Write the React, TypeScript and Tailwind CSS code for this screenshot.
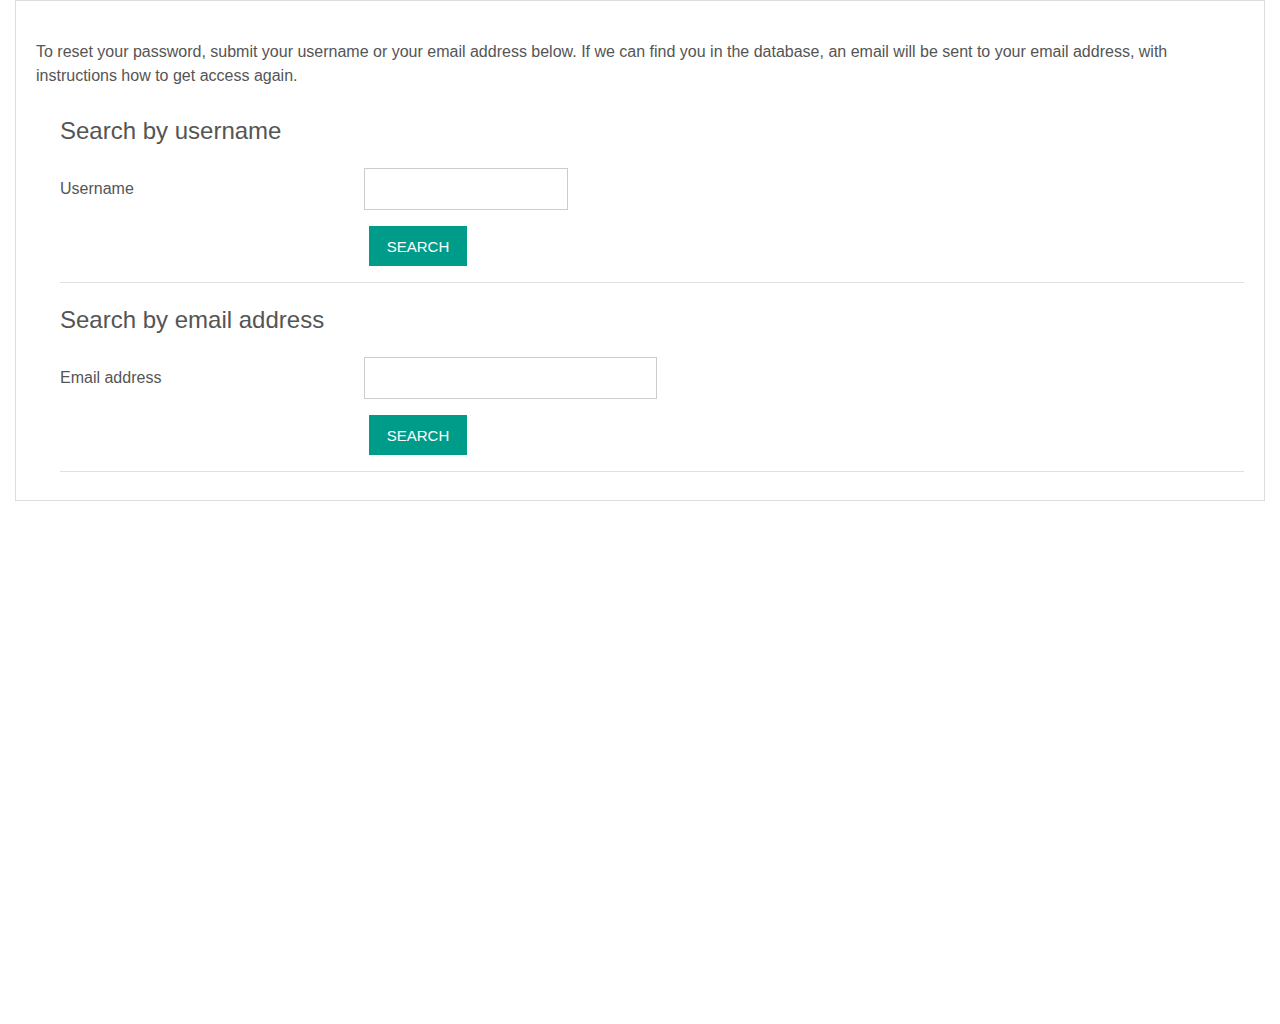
import React from 'react';

const SearchSection = ({ title, label, inputWidth, top }: { title: string; label: string; inputWidth: string; top: string }) => (
  <div className={`${top} pb-4 border-b border-[#e0e0e0]`}>
    <h3 className="text-[24px] leading-[26px] text-[#555]">{title}</h3>
    <div className="flex items-center mt-6">
      <label className="w-[304px] text-[16px] text-[#555]">{label}</label>
      <input type="text" className={`${inputWidth} h-[42px] border border-[#ccc] bg-white outline-none`} />
    </div>
    <div className="pl-[309px] mt-4">
      <button className="h-10 w-[98px] pt-0.5 bg-[#009c8a] text-white text-[15px] uppercase">Search</button>
    </div>
  </div>
);

export default function App() {
  return (
    <div className="font-['Liberation_Sans',Arial,sans-serif] bg-white min-h-screen">
      <div className="ml-[15px] w-[1250px] border border-[#ddd] pt-[39px] pb-[28px] px-5">
        <p className="text-[16px] leading-6 text-[#555]">
          To reset your password, submit your username or your email address below. If we can find you in the database, an email will be sent to your email address, with instructions how to get access again.
        </p>
        <div className="pl-6 mt-[7px]">
          <SearchSection top="pt-[23px]" title="Search by username" label="Username" inputWidth="w-[204px]" />
          <SearchSection top="pt-6" title="Search by email address" label="Email address" inputWidth="w-[293px]" />
        </div>
      </div>
    </div>
  );
}
